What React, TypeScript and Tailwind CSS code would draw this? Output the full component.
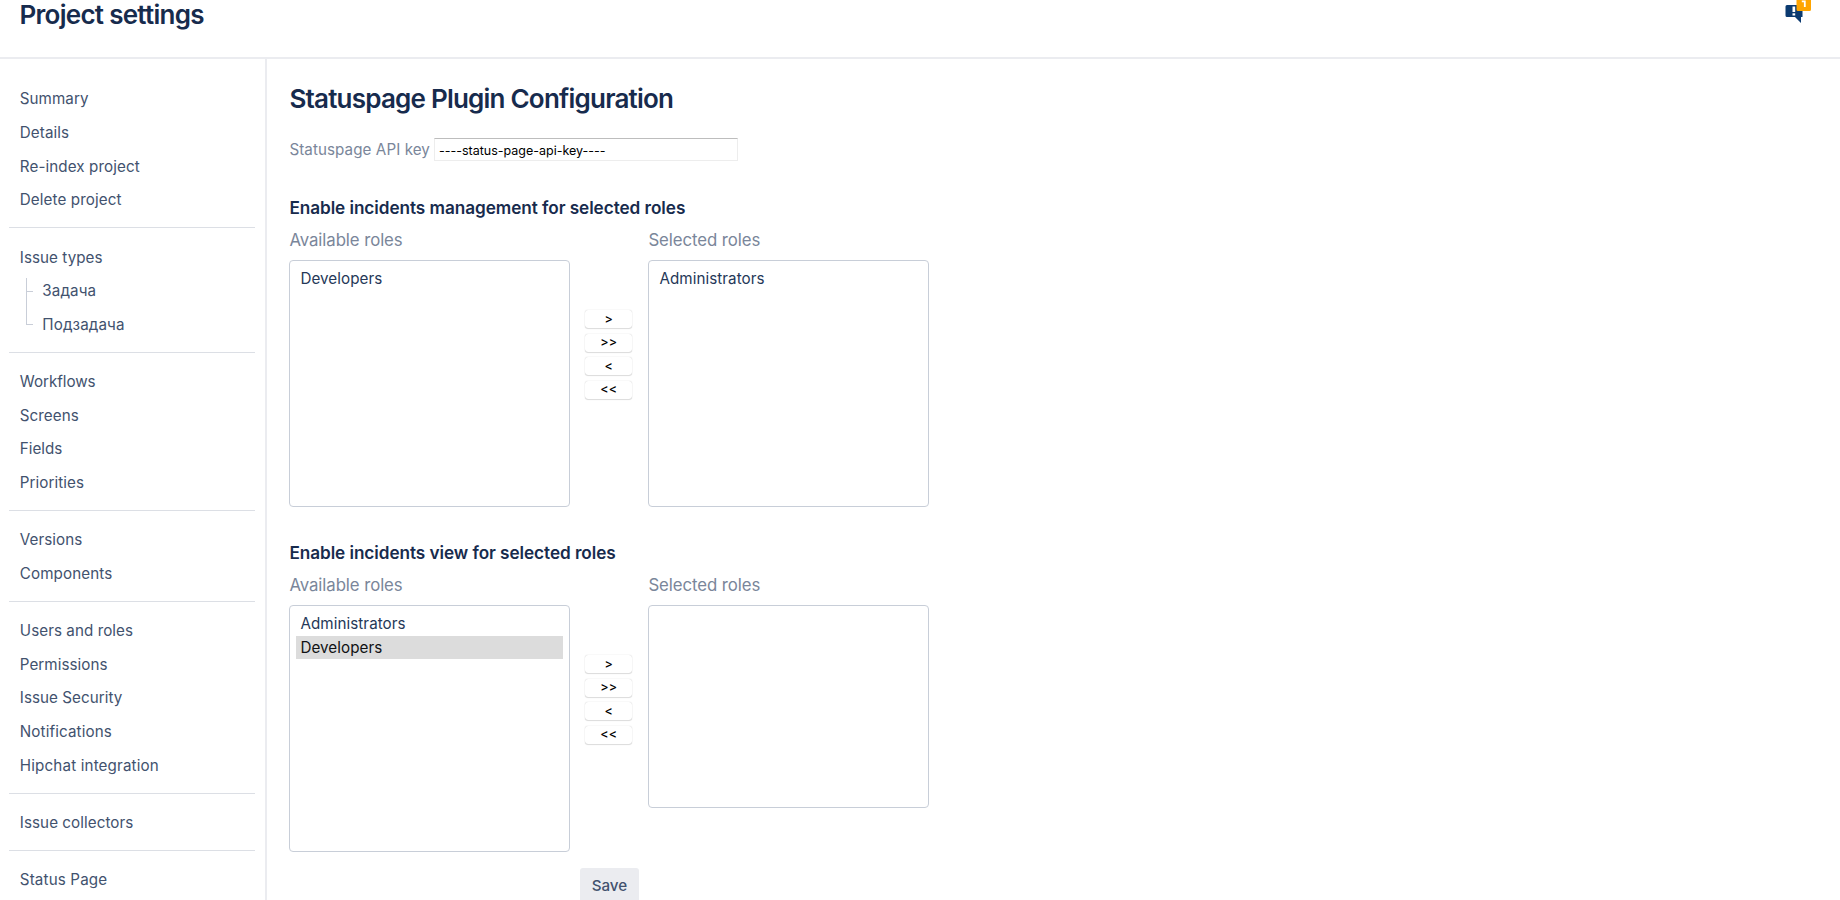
import React from 'react';

const navGroups = [
  [
    { label: 'Summary', tracking: 'tracking-[0.05px]' },
    { label: 'Details', tracking: 'tracking-[0.08px]' },
    { label: 'Re-index project', tracking: 'tracking-[0.1px]' },
    { label: 'Delete project', tracking: 'tracking-[0.1px]' },
  ],
  [
    { label: 'Issue types', tracking: 'tracking-[0.05px]' },
    { label: 'Задача', tracking: 'tracking-[0.1px]', child: 'mid' },
    { label: 'Подзадача', tracking: 'tracking-[0.1px]', child: 'last' },
  ],
  [
    { label: 'Workflows', tracking: 'tracking-[-0.05px]' },
    { label: 'Screens', tracking: 'tracking-[0.05px]' },
    { label: 'Fields', tracking: 'tracking-[0px]' },
    { label: 'Priorities', tracking: 'tracking-[0.06px]' },
  ],
  [
    { label: 'Versions', tracking: 'tracking-[0.05px]' },
    { label: 'Components', tracking: 'tracking-[0.1px]' },
  ],
  [
    { label: 'Users and roles', tracking: 'tracking-[0.06px]' },
    { label: 'Permissions', tracking: 'tracking-[0.05px]' },
    { label: 'Issue Security', tracking: 'tracking-[0.05px]' },
    { label: 'Notifications', tracking: 'tracking-[0.12px]' },
    { label: 'Hipchat integration', tracking: 'tracking-[0.15px]' },
  ],
  [{ label: 'Issue collectors', tracking: 'tracking-[0.06px]' }],
  [{ label: 'Status Page', tracking: 'tracking-[0.14px]' }],
] as { label: string; tracking: string; child?: 'mid' | 'last' }[][];

function TreeBranch({ last }: { last: boolean }) {
  return (
    <span className="flex h-full w-[22.5px] shrink-0 flex-col pl-[6.5px]">
      <span
        className={
          'w-[7px] border-b border-l border-[#c9ced8] ' + (last ? 'h-1/2' : 'mt-[3px] h-[13.84px]')
        }
      />
      <span className={last ? 'h-1/2' : 'h-1/2 border-l border-[#c9ced8]'} />
    </span>
  );
}

function Sidebar() {
  return (
    <nav className="flex w-[267px] shrink-0 flex-col border-r-2 border-[#ebecf0] pt-[24px] pr-[10.5px] pl-[8.5px]">
      {navGroups.map((group, i) => (
        <ul key={i} className={i > 0 ? 'mt-[9.8px] border-t border-[#dcdfe5] pt-[12.7px]' : ''}>
          {group.map((item) => (
            <li key={item.label} className="flex h-[33.68px] items-center pl-[11.3px] text-[15.2px] text-[#42526e]">
              {item.child && <TreeBranch last={item.child === 'last'} />}
              <a className={item.tracking}>{item.label}</a>
            </li>
          ))}
        </ul>
      ))}
    </nav>
  );
}

function FeedbackIcon() {
  return (
    <svg width="30" height="26" viewBox="0 0 30 26" className="block">
      <path d="M3 5h16.500v12h-1.500v6l-6-6H4a1.500 1.500 0 0 1-1.500-1.500V6.500A1.500 1.500 0 0 1 4 5z" fill="#0b3a70" />
      <rect x="9.500" y="6.500" width="2.700" height="5.500" fill="#fff" />
      <rect x="9.500" y="13.300" width="2.700" height="2.200" fill="#fff" />
      <path d="M13.500-1h14.500v10.500a1.500 1.500 0 0 1-1.500 1.500H15a1.500 1.500 0 0 1-1.500-1.500z" fill="#ffa500" />
      <path d="M18.800 1.300h3v5.700" fill="none" stroke="#fff" strokeWidth="1.800" />
    </svg>
  );
}

function Mover() {
  return (
    <div className="mt-[50px] mr-[16px] ml-[15.200px] flex w-[47.300px] flex-col gap-[5.500px]">
      {['>', '>>', '<', '<<'].map((s) => (
        <button
          key={s}
          className="flex h-[18px] items-center justify-center rounded-[3px] bg-white text-[12.500px] font-medium tracking-[0.1px] text-black shadow-[0_0_1px_rgba(0,0,0,0.25),0_1px_1px_rgba(0,0,0,0.12)]"
        >
          {s}
        </button>
      ))}
    </div>
  );
}

function RoleList({ roles, selected, short }: { roles: string[]; selected?: string; short?: boolean }) {
  return (
    <ul
      className={
        'w-[280.500px] rounded-[4px] border border-[#c8ced8] px-[5.500px] pt-[6px] ' +
        (short ? 'h-[202.500px]' : 'h-[247px]')
      }
    >
      {roles.map((r) => (
        <li
          key={r}
          className={
            'h-[23.500px] pl-[4.5px] text-[15.2px] leading-[24px] tracking-[0.07px] ' +
            (r === selected ? 'bg-[#dcdcdc] text-[#101214]' : 'text-[#253858]')
          }
        >
          {r}
        </li>
      ))}
    </ul>
  );
}

interface PickerProps {
  title: string;
  available: string[];
  chosen: string[];
  selected?: string;
  short?: boolean;
}

function RolePicker({ title, available, chosen, selected, short }: PickerProps) {
  return (
    <section className="h-[345px]">
      <h3 className="h-[24px] text-[17.2px] leading-[25px] font-semibold tracking-[-0.06px] text-[#172b4d]">{title}</h3>
      <div className="mt-[9px] flex h-[24px] text-[16.8px] leading-[25px] tracking-[-0.08px] text-[#7a869a]">
        <span className="w-[359px]">Available roles</span>
        <span>Selected roles</span>
      </div>
      <div className="mt-[8px] flex items-start">
        <RoleList roles={available} selected={selected} />
        <Mover />
        <RoleList roles={chosen} short={short} />
      </div>
    </section>
  );
}

export default function App() {
  return (
    <div className="flex h-[900px] w-[1840px] flex-col overflow-hidden bg-white font-['Inter','Liberation_Sans',sans-serif]">
      <header className="flex h-[59px] shrink-0 justify-between border-b-2 border-[#ebecf0] pr-[27px] pl-[19.5px]">
        <h1 className="text-[26px] leading-[29px] font-semibold tracking-[-0.72px] text-[#172b4d]">Project settings</h1>
        <FeedbackIcon />
      </header>
      <div className="flex min-h-0 flex-1">
        <Sidebar />
        <main className="flex flex-1 flex-col pt-[24px] pl-[22.400px]">
          <h2 className="h-[32px] text-[26px] leading-[32px] font-semibold tracking-[-0.78px] text-[#172b4d]">
            Statuspage Plugin Configuration
          </h2>
          <div className="mt-[23px] flex h-[23px] items-center">
            <label className="w-[144.500px] pt-[2px] text-[15.2px] tracking-[0.07px] text-[#7a869a]">
              Statuspage API key
            </label>
            <input
              readOnly
              value="----status-page-api-key----"
              className="h-[23px] w-[304.500px] border border-[#ededed] border-t-[#bdbdbd] pt-[2px] pl-[4px] text-[12.500px] text-black outline-none"
            />
          </div>
          <div className="mt-[34px]">
            <RolePicker
              title="Enable incidents management for selected roles"
              available={['Developers']}
              chosen={['Administrators']}
            />
            <RolePicker
              title="Enable incidents view for selected roles"
              available={['Administrators', 'Developers']}
              chosen={[]}
              selected="Developers"
              short
            />
          </div>
          <button className="-mt-[17px] ml-[290.5px] h-[36px] w-[59px] shrink-0 rounded-[3px] bg-[#ebecf0] text-[15.2px] font-medium tracking-[-0.1px] text-[#42526e]">
            Save
          </button>
        </main>
      </div>
    </div>
  );
}
